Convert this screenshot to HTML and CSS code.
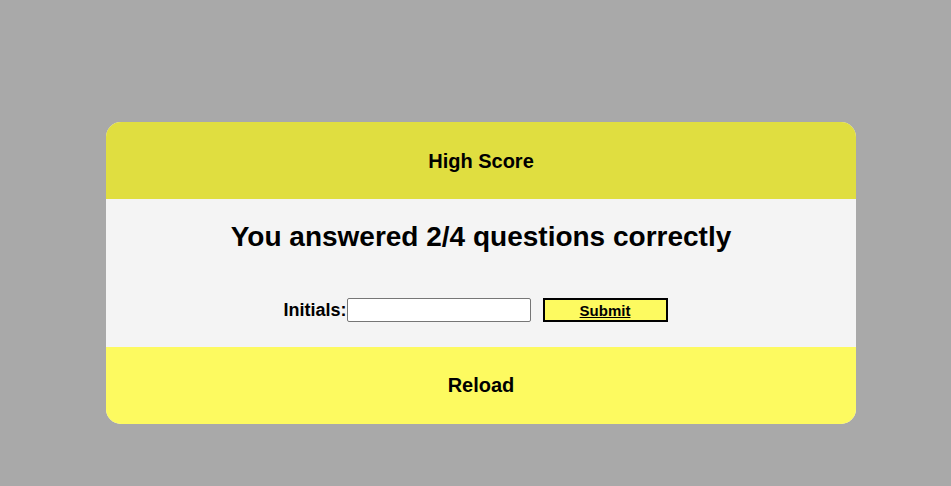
FILE: index.html
```html
<!DOCTYPE html>
<html>
<head>
<meta charset="utf-8">
<link rel="stylesheet" href="styles.css">
</head>
<body>
<main class="page">
  <section class="card">
    <header class="card-head">High Score</header>
    <div class="card-body">
      <h1 class="result">You answered 2/4 questions correctly</h1>
      <form class="score-form">
        <label class="label" for="initials">Initials:</label><input id="initials" class="initials" type="text">
        <button type="button" class="submit">Submit</button>
      </form>
    </div>
    <footer class="card-foot">Reload</footer>
  </section>
</main>
</body>
</html>
```
FILE: styles.css
```css
html, body {
  margin: 0;
  padding: 0;
}
body {
  background: #a9a9a9;
  font-family: "Liberation Sans", Arial, sans-serif;
  color: #000;
}
.page {
  padding-top: 122px;
  display: flex;
  justify-content: center;
}
.card {
  width: 750px;
  margin-left: 11px;
  border-radius: 15px;
  overflow: hidden;
  background: #f4f4f4;
}
.card-head {
  height: 77px;
  box-sizing: border-box;
  padding-top: 2px;
  background: #e0de40;
  display: flex;
  align-items: center;
  justify-content: center;
  font-weight: bold;
  font-size: 20px;
}
.card-body {
  height: 148px;
  display: flex;
  flex-direction: column;
  align-items: center;
}
.result {
  margin: 22px 0 0;
  font-size: 28px;
  font-weight: bold;
  line-height: 32px;
}
.score-form {
  margin-top: 45px;
  margin-right: 11px;
  display: flex;
  align-items: center;
}
.label {
  font-weight: bold;
  font-size: 18px;
}
.initials {
  width: 184px;
  height: 24px;
  box-sizing: border-box;
  border: 1px solid #767676;
  border-radius: 2px;
  background: #fff;
  padding: 0 4px;
  margin: 0;
}
.submit {
  margin-left: 12px;
  width: 125px;
  height: 24px;
  box-sizing: border-box;
  border: 2px solid #000;
  background: #fdfa60;
  font-family: inherit;
  font-weight: bold;
  font-size: 15px;
  text-decoration: underline;
  padding: 0;
}
.card-foot {
  height: 77px;
  background: #fdfa60;
  display: flex;
  align-items: center;
  justify-content: center;
  font-weight: bold;
  font-size: 20px;
}
```
